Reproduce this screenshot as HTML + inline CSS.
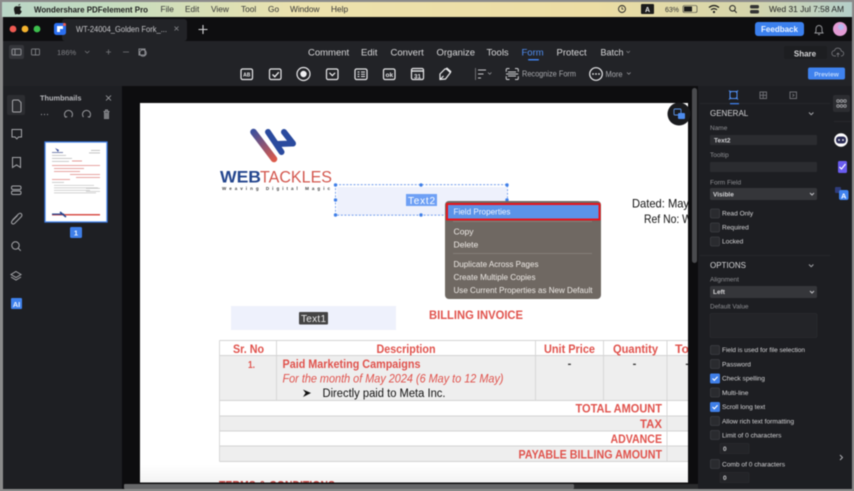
<!DOCTYPE html>
<html><head><meta charset="utf-8"><style>
html,body{margin:0;padding:0;background:#8b8b8b;width:854px;height:491px;overflow:hidden}
svg{display:block;filter:blur(.45px)}
text{font-family:"Liberation Sans",sans-serif}
.nav{font-size:9.5px;fill:#d8d8da}
.lab{font-size:6.5px;fill:#8f9094}
.cb{font-size:6.6px;fill:#d5d5d7}
.hd{font-size:8px;fill:#d5d5d7}
.m{font-size:8.6px;fill:#eeeae6}
.r{font-weight:bold;fill:#e0524c;font-size:11.5px}
.ic{fill:none;stroke:#8c8d92;stroke-width:1}
.tb{fill:none;stroke:#e8e8ea;stroke-width:1.2}
.box{fill:#2a2b2f;stroke:#3d3e43;stroke-width:.8}
.in{fill:#2b2c30}
.g{stroke:#d4d4d4;stroke-width:.9;fill:none}
</style></head><body>
<svg width="854" height="491" viewBox="0 0 854 491" xmlns="http://www.w3.org/2000/svg">
<defs><linearGradient id="mb" x1="0" x2="1" y1="0" y2="0"><stop offset="0" stop-color="#b9d5c6"/><stop offset=".12" stop-color="#c4dcc0"/><stop offset=".35" stop-color="#ece2ae"/><stop offset=".7" stop-color="#ecdda4"/><stop offset=".88" stop-color="#d5d5ac"/><stop offset="1" stop-color="#b4cfc9"/></linearGradient>
<linearGradient id="lg" gradientUnits="userSpaceOnUse" x1="253" y1="131" x2="275" y2="160"><stop offset="0" stop-color="#3c4f9c"/><stop offset="1" stop-color="#dc5a4a"/></linearGradient>
<linearGradient id="pf" x1="0" x2="0" y1="0" y2="1"><stop offset="0" stop-color="#fff"/><stop offset="1" stop-color="#f3f3f3"/></linearGradient>
<clipPath id="pc"><rect x="140" y="103" width="548" height="379.500"/></clipPath></defs>
<rect width="854" height="491" fill="#8b8b8b"/>
<rect x="2" y="2" width="850" height="15" fill="url(#mb)"/>
<rect x="3" y="17" width="849" height="472" fill="#0e0e10"/>
<rect x="3" y="41" width="849" height="45" fill="#222327"/>
<path d="M3 41V22q0-4 4-4h1v23z" fill="#0e0e10"/>
<rect x="62" y="19" width="125" height="22" rx="3" fill="#222327"/>

<!-- menu bar -->
<path d="M18 5.500q1-1.500 2.200-1.500-.1 1.400-2.200 1.500zM14 9c0-3 3-3 4-2.500 1-.5 2.500-.5 3.500.8-1.800 1-1.500 3.400.3 4-.6 1.700-1.800 3.200-2.800 3.200-1 0-1-.5-2-.5s-1 .5-2 .5C15.500 14.500 14 11.500 14 9z" fill="#1a1a1a"/>
<text x="34" y="12.300" font-size="8.600" font-weight="bold" fill="#1d1d1d" textLength="114" lengthAdjust="spacingAndGlyphs">Wondershare PDFelement Pro</text>
<g font-size="8.300" fill="#333"><text x="160.500" y="12">File</text><text x="185" y="12">Edit</text><text x="211" y="12">View</text><text x="241" y="12">Tool</text><text x="268" y="12">Go</text><text x="290" y="12">Window</text><text x="331" y="12">Help</text></g>
<circle cx="622" cy="9" r="3.500" fill="none" stroke="#222" stroke-width=".9"/><path d="M622 7v2.200h1.600" fill="none" stroke="#222" stroke-width=".7"/>
<rect x="641" y="4" width="13" height="10" rx="1" fill="#1b1b1b"/><text x="647.500" y="12" font-size="7" font-weight="bold" fill="#eee" text-anchor="middle">A</text>
<text x="665" y="12" font-size="7" fill="#333">63%</text>
<rect x="683" y="5.500" width="14" height="7" rx="1.500" fill="none" stroke="#333" stroke-width=".6"/><rect x="684" y="6.500" width="8" height="5" fill="#1b1b1b"/>
<path d="M709 7.500q5-4 10 0M711 9.800q3-2.400 6 0" fill="none" stroke="#1b1b1b" stroke-width="1.200"/><circle cx="714" cy="12" r="1.100" fill="#1b1b1b"/>
<circle cx="732.500" cy="8.300" r="2.800" fill="none" stroke="#222" stroke-width="1"/><path d="M734.500 10.500l2.200 2.300" stroke="#222" stroke-width="1"/>
<rect x="750" y="5" width="9" height="3.500" rx="1.500" fill="#333"/><rect x="750" y="10" width="9" height="3.500" rx="1.500" fill="#333"/>
<text x="769" y="12" font-size="8.300" fill="#222" textLength="75" lengthAdjust="spacingAndGlyphs">Wed 31 Jul  7:58 AM</text>

<!-- title bar -->
<circle cx="13" cy="29" r="3.400" fill="#ee5a52"/><circle cx="25" cy="29" r="3.400" fill="#f4b32e"/><circle cx="37" cy="29" r="3.400" fill="#3dc04e"/>
<rect x="54" y="23" width="12" height="12" rx="2.500" fill="#2b6ff0"/><path d="M57 26h6v3h-3v3h-3z" fill="#fff"/><circle cx="64.500" cy="24.500" r="1.500" fill="#ee5a52"/>
<text x="76" y="32" font-size="7.800" fill="#c6c6c9" textLength="91" lengthAdjust="spacingAndGlyphs">WT-24004_Golden Fork_...</text>
<path d="M174.500 26.500l4 4M178.500 26.500l-4 4" stroke="#85868a" stroke-width=".8"/>
<path d="M203 25v9M198.500 29.500h9" stroke="#d5d5d7" stroke-width="1.100"/>
<rect x="755" y="22" width="49" height="14" rx="3" fill="#3b80ee"/><text x="779.500" y="32" font-size="8" font-weight="bold" fill="#eaf2ff" text-anchor="middle">Feedback</text>
<path d="M815 33h8l-1-1.500v-3a3 3 0 0 0-6 0v3zM818 34.500h2" fill="none" stroke="#9a9b9f" stroke-width=".9"/>
<circle cx="840" cy="29" r="7" fill="#e29bd4"/><circle cx="841" cy="27" r="3" fill="#b5b8ee"/>

<!-- toolbar 1 -->
<rect x="9" y="45" width="15" height="14" rx="2" fill="#35363b"/>
<rect x="12" y="49" width="9" height="6" rx="1" class="ic"/><path d="M15 49v6" class="ic"/>
<rect x="31.500" y="49" width="8" height="6" rx="1" class="ic" opacity=".8"/><path d="M35.500 49v6" class="ic" opacity=".8"/>
<text x="57" y="55" font-size="7.500" fill="#808186">186%</text>
<path d="M85 51l2.200 2 2.200-2M106 52h5M108.500 49.500v5M123 52h6" fill="none" stroke="#77787c" stroke-width=".8"/>
<rect x="139" y="49" width="6" height="6" class="ic"/><circle cx="143" cy="53" r="3.300" class="ic"/>
<g class="nav"><text x="308" y="55.500">Comment</text><text x="361" y="55.500">Edit</text><text x="390.500" y="55.500">Convert</text><text x="436.500" y="55.500">Organize</text><text x="486.500" y="55.500">Tools</text><text x="521.500" y="55.500" style="fill:#4f8ef2">Form</text><text x="556.500" y="55.500">Protect</text><text x="600.500" y="55.500" textLength="23" lengthAdjust="spacingAndGlyphs">Batch</text></g>
<path d="M626.500 51l1.700 1.700 1.700-1.700" fill="none" stroke="#85868a" stroke-width=".7"/>
<rect x="528" y="59" width="11" height="1.500" rx=".7" fill="#3f7fe8"/>
<rect x="784" y="46" width="43" height="13" rx="2" fill="#1d1e21"/><text x="805" y="56.500" font-size="8" font-weight="bold" fill="#d5d5d7" text-anchor="middle">Share</text>
<path d="M836 56h-1.500a2.700 2.700 0 0 1 0-5.400 3.500 3.500 0 0 1 6.800.5 2.400 2.400 0 0 1 0 4.900H841M838 57v-4M836.500 54.500l1.500-1.500 1.500 1.500" fill="none" stroke="#808186" stroke-width=".7"/>

<!-- toolbar 2 icons -->
<rect x="241" y="69" width="11.500" height="10.500" rx="1.500" class="tb"/><text x="246.800" y="76.500" font-size="5" font-weight="bold" fill="#e8e8ea" text-anchor="middle">AB</text>
<rect x="269.500" y="69" width="11.500" height="10.500" rx="1.500" class="tb"/><path d="M272.500 74.500l2.300 2.200 4-4.500" fill="none" stroke="#e8e8ea" stroke-width="1.400"/>
<circle cx="303.500" cy="74" r="6.500" class="tb"/><circle cx="303.500" cy="74" r="3.200" fill="#f0f0f2"/>
<rect x="326.500" y="69" width="11.500" height="10.500" rx="1.500" class="tb"/><path d="M329.500 72.800l2.800 2.800 2.800-2.800" fill="none" stroke="#e8e8ea" stroke-width="1.200"/>
<rect x="355" y="69" width="12" height="10.500" rx="1.500" class="tb"/><path d="M357.500 72h2M361 72h4M357.500 74.200h2M361 74.200h4M357.500 76.500h2M361 76.500h4" stroke="#e8e8ea" stroke-width="1"/>
<rect x="383.500" y="69" width="11.500" height="10.500" rx="1.500" class="tb"/><text x="389.300" y="77" font-size="6.500" font-weight="bold" fill="#e8e8ea" text-anchor="middle">ok</text>
<rect x="411.500" y="68.500" width="12" height="11" rx="1.500" class="tb"/><path d="M411.500 71h12" stroke="#e8e8ea" stroke-width="1.400"/><text x="417.500" y="78.300" font-size="6.300" font-weight="bold" fill="#e8e8ea" text-anchor="middle">31</text>
<path d="M440 79.500v-5.500l5-5 1.500 0 4 3.500-5 6.500zM440 79.500l3.500-3.500" fill="none" stroke="#e8e8ea" stroke-width="1.200"/><path d="M445.500 68.500l5 4.200 1-1.300-4.500-4z" fill="#e8e8ea"/>
<path d="M475.500 68v12" stroke="#77787c" stroke-width=".9"/><path d="M478 70h8M478 74h5.500M478 78h3" stroke="#c8c8cb" stroke-width="1"/><path d="M488 72.500l1.700 1.700 1.700-1.700" fill="none" stroke="#a0a1a5" stroke-width=".7"/>
<path d="M509.500 68.500h-2q-1.300 0-1.300 1.300v2M515 68.500h2q1.300 0 1.300 1.300v2M509.500 79.500h-2q-1.300 0-1.300-1.300v-2M515 79.500h2q1.300 0 1.300-1.300v-2" fill="none" stroke="#d0d0d3" stroke-width="1"/><path d="M508 72h8M506 74h12.300M508 76h8" stroke="#d0d0d3" stroke-width=".9"/>
<text x="522" y="76.500" font-size="8.300" fill="#a7a8ac" textLength="54" lengthAdjust="spacingAndGlyphs">Recognize Form</text>
<circle cx="596" cy="74" r="6.300" class="tb"/><circle cx="593" cy="74" r=".9" fill="#e8e8ea"/><circle cx="596" cy="74" r=".9" fill="#e8e8ea"/><circle cx="599" cy="74" r=".9" fill="#e8e8ea"/>
<text x="605.500" y="77" font-size="8.300" fill="#a7a8ac" textLength="17" lengthAdjust="spacingAndGlyphs">More</text>
<path d="M627 72.500l1.800 1.800 1.800-1.800" fill="none" stroke="#a0a1a5" stroke-width=".7"/>
<rect x="808" y="67.500" width="37" height="12" rx="2" fill="#3f82ee"/><text x="826.500" y="76.300" font-size="6.500" font-weight="bold" fill="#bcd5fb" text-anchor="middle">Preview</text>

<!-- left sidebar -->
<rect x="3" y="86" width="119" height="403" fill="#1e1f23"/>
<rect x="7" y="95" width="18" height="20" rx="2" fill="#2c2d31"/>
<path d="M12.500 101.500q0-1.500 1.500-1.500h4.500l2.500 2.500v8.500q0 1-1 1h-6.500q-1 0-1-1z" class="ic" style="stroke:#a5a6aa"/>
<path d="M12 129.500h9.500v7.500h-3l-1.700 1.900-1.700-1.900H12z" class="ic" style="stroke:#a5a6aa"/>
<path d="M12.500 157.500h8v10l-4-2.600-4 2.600z" class="ic" style="stroke:#a5a6aa"/>
<rect x="11.500" y="186" width="9.500" height="3.500" rx="1.500" class="ic" style="stroke:#a5a6aa"/><rect x="11.500" y="191" width="9.500" height="3.500" rx="1.500" class="ic" style="stroke:#a5a6aa"/>
<path d="M12.500 220l6-6q2-1.500 3 0t-.5 3l-6.500 6.500q-1.500 1-2.500 0t0-2.500l5.500-5.500" class="ic" style="stroke:#a5a6aa"/>
<circle cx="15.500" cy="245.500" r="3.700" class="ic" style="stroke:#a5a6aa"/><path d="M18.300 248.300l2.500 2.500" class="ic" style="stroke:#a5a6aa"/>
<path d="M16 271.500l5 3-5 3-5-3zM11 277l5 3 5-3" class="ic" style="stroke:#a5a6aa"/>
<rect x="11" y="298" width="11" height="11" rx="1" fill="#3f82ee"/><text x="16.500" y="307" font-size="7.500" font-weight="bold" fill="#e8f0ff" text-anchor="middle">AI</text>
<text x="40" y="100.500" font-size="7.400" font-weight="bold" fill="#b8b9bd">Thumbnails</text>
<path d="M106 95.500l5 5M111 95.500l-5 5" stroke="#a5a6aa" stroke-width=".8"/>
<g fill="#9a9b9f"><circle cx="41.500" cy="114.500" r=".6"/><circle cx="44.500" cy="114.500" r=".6"/><circle cx="47.500" cy="114.500" r=".6"/></g>
<path d="M65.500 117a4 4 0 1 1 6 0M64.500 115.500l1 1.700 1.700-.6M83.500 117a4 4 0 1 1 6 0M90.500 115.500l-1 1.700-1.700-.6" class="ic" style="stroke:#9a9b9f"/>
<path d="M103.500 111.500h6M104.500 112v6.500h4V112M105.500 111v-1h2v1" class="ic" style="stroke:#8c8d92"/><rect x="104.500" y="112.500" width="4" height="6" fill="#77787c"/>
<rect x="45" y="142" width="62" height="80" fill="#fff" stroke="#3f7fe8" stroke-width="1.300"/>
<path d="M55 148l4 2-1 2z" fill="#3c4f9c"/><rect x="52" y="152" width="11" height="1" fill="#7b86b0"/>
<g fill="#b5b5b5"><rect x="52" y="155" width="14" height=".7"/><rect x="52" y="158" width="20" height=".7"/><rect x="52" y="161" width="17" height=".7"/><rect x="91" y="150" width="9" height=".8"/><rect x="89" y="152.500" width="11" height=".8"/></g>
<rect x="72" y="160.500" width="10" height="1" fill="#e49c98"/>
<g fill="#e7a5a1"><rect x="52" y="165" width="48" height="1"/><rect x="54" y="168" width="30" height="1"/><rect x="54" y="171" width="26" height="1"/><rect x="70" y="174" width="30" height="1"/><rect x="76" y="177" width="24" height="1"/><rect x="52" y="179" width="18" height="1"/></g>
<g fill="#c0c0c0"><rect x="52" y="182" width="12" height=".8"/><rect x="54" y="185" width="40" height=".7"/><rect x="54" y="187.500" width="44" height=".7"/><rect x="54" y="190" width="36" height=".7"/><rect x="54" y="192.500" width="42" height=".7"/><rect x="86" y="188" width="14" height=".7"/><rect x="86" y="191" width="14" height=".7"/></g>
<rect x="52" y="214" width="48" height="1.500" fill="#d8504a"/><rect x="52" y="213.500" width="12" height="1.300" fill="#28478f"/><path d="M60 212l6 5" stroke="#28478f" stroke-width="1.500"/>
<rect x="70" y="227" width="12" height="11" rx="1.500" fill="#3f7fe8"/><text x="76" y="235.500" font-size="7.500" font-weight="bold" fill="#eef4ff" text-anchor="middle">1</text>

<!-- doc -->
<rect x="122" y="86" width="576" height="403" fill="#0d0d0f"/>
<rect x="140" y="103" width="548" height="379.500" fill="#fff"/>
<rect x="140" y="465" width="548" height="17.500" fill="url(#pf)"/>
<rect x="124" y="484" width="450" height="5" rx="1" fill="#666769"/>
<rect x="574" y="484" width="124" height="5" fill="#2a2b2d"/>
<rect x="0" y="489" width="854" height="2" fill="#8b8b8b"/>

<g clip-path="url(#pc)">
<!-- logo -->
<path d="M253.500 132L274 159" stroke="url(#lg)" stroke-width="6.500" stroke-linecap="round" fill="none"/>
<g stroke="#2a4a9e" stroke-width="6" stroke-linecap="round" fill="none"><path d="M268 132l13.500 20M284 132l9 11.500M277 144l15-.5"/></g>
<text x="220" y="182.500" font-size="17" font-weight="bold" fill="#24468e" textLength="41" lengthAdjust="spacingAndGlyphs">WEB</text>
<text x="260" y="182.500" font-size="17" fill="#d3574e" textLength="72" lengthAdjust="spacingAndGlyphs">TACKLES</text>
<text x="222" y="190" font-size="4.500" fill="#444" textLength="108" lengthAdjust="spacing" font-weight="bold">Weaving Digital Magic</text>

<!-- field 2 -->
<rect x="337" y="187" width="170" height="28" fill="#eef1fc"/>
<rect x="335.500" y="184.700" width="172" height="30.500" fill="none" stroke="#5f8fea" stroke-width=".8" stroke-dasharray="2 1.600"/>
<g fill="#3f7fe8"><circle cx="335.500" cy="185" r="1.700"/><circle cx="421" cy="185" r="1.700"/><circle cx="507" cy="185" r="1.700"/><circle cx="335.500" cy="200" r="1.700"/><circle cx="507" cy="200" r="1.700"/><circle cx="335.500" cy="215" r="1.700"/><circle cx="421" cy="215" r="1.700"/></g>
<rect x="406" y="194" width="31" height="12" fill="#6ea0f5"/><text x="421.500" y="204" font-size="10" fill="#fff" text-anchor="middle" textLength="27" lengthAdjust="spacing">Text2</text>
<text x="632" y="207.500" font-size="12" fill="#111" textLength="57" lengthAdjust="spacingAndGlyphs">Dated: May</text>
<text x="644" y="223" font-size="12" fill="#111" textLength="48" lengthAdjust="spacingAndGlyphs">Ref No: W</text>

<!-- field 1 -->
<rect x="231" y="306" width="165" height="24" fill="#eef1fc"/>
<rect x="299" y="312" width="29" height="12.500" rx="1" fill="#444"/><text x="313.500" y="322" font-size="10" fill="#eee" text-anchor="middle" textLength="25" lengthAdjust="spacing">Text1</text>
<text x="429" y="319" class="r" style="font-size:12px" textLength="94" lengthAdjust="spacingAndGlyphs">BILLING INVOICE</text>

<!-- table -->
<rect x="220" y="356" width="468" height="45" fill="#eeeeee"/><rect x="220" y="416" width="468" height="15" fill="#eeeeee"/><rect x="220" y="446" width="468" height="15" fill="#eeeeee"/>
<g class="g"><path d="M219.500 340.500H688M219.500 355.500H688M219.500 400.500H688M219.500 416H688M219.500 431H688M219.500 446H688M219.500 461.500H688"/><path d="M219.500 340.500V461.500M276.500 340.500V400.500M535.500 340.500V400.500M603.500 340.500V400.500M667 340.500V461.500"/></g>
<text x="233" y="353" class="r" textLength="31" lengthAdjust="spacingAndGlyphs">Sr. No</text>
<text x="376.500" y="353" class="r" textLength="59" lengthAdjust="spacingAndGlyphs">Description</text>
<text x="544" y="353" class="r" textLength="51" lengthAdjust="spacingAndGlyphs">Unit Price</text>
<text x="613" y="353" class="r" textLength="45" lengthAdjust="spacingAndGlyphs">Quantity</text>
<text x="675" y="353" class="r" textLength="14" lengthAdjust="spacingAndGlyphs">To</text>
<text x="248" y="368" class="r" textLength="7" lengthAdjust="spacingAndGlyphs" style="font-size:10px">1.</text>
<text x="282.500" y="368" class="r" textLength="138" lengthAdjust="spacingAndGlyphs">Paid Marketing Campaigns</text>
<text x="282.500" y="382.500" font-size="11.500" font-style="italic" fill="#e0524c" textLength="221" lengthAdjust="spacingAndGlyphs">For the month of May 2024 (6 May to 12 May)</text>
<path d="M303 389.500l8 3.500-8 4 2.500-4z" fill="#111"/>
<text x="322.500" y="397" font-size="11.500" fill="#111" textLength="123" lengthAdjust="spacingAndGlyphs">Directly paid to Meta Inc.</text>
<text x="569.500" y="367" font-size="11" font-weight="bold" fill="#333" text-anchor="middle">-</text><text x="634.500" y="367" font-size="11" font-weight="bold" fill="#333" text-anchor="middle">-</text><text x="689" y="367" font-size="11" font-weight="bold" fill="#333" text-anchor="end">-</text>
<text x="575.500" y="412.500" class="r" textLength="86.500" lengthAdjust="spacingAndGlyphs">TOTAL AMOUNT</text>
<text x="640" y="428" class="r" textLength="22" lengthAdjust="spacingAndGlyphs">TAX</text>
<text x="610.500" y="443" class="r" textLength="51.500" lengthAdjust="spacingAndGlyphs">ADVANCE</text>
<text x="518.500" y="458.500" class="r" textLength="143.500" lengthAdjust="spacingAndGlyphs">PAYABLE BILLING AMOUNT</text>
<text x="219" y="489.500" font-size="12" font-weight="bold" fill="#c0403c" textLength="116" lengthAdjust="spacingAndGlyphs">TERMS &amp; CONDITIONS</text>
</g>

<rect x="692" y="88" width="5" height="175" rx="2.500" fill="#4a4b4e"/>
<circle cx="679" cy="114" r="11.500" fill="#1a1b1e"/><rect x="674" y="109" width="7" height="6" rx="1" fill="none" stroke="#5b93e8" stroke-width=".9"/><rect x="678" y="113" width="7" height="6" rx="1" fill="#4d8cee"/>

<!-- context menu -->
<rect x="445" y="201" width="156" height="98" rx="4" fill="#6f6862"/>
<rect x="447" y="204" width="152.500" height="15.500" fill="#5b93e8" stroke="#e8141c" stroke-width="2"/>
<text x="453.500" y="214.500" class="m" style="fill:#f2f6ff" textLength="57" lengthAdjust="spacingAndGlyphs">Field Properties</text>
<path d="M453 221.500h139M453 253.500h139" stroke="#8b8580" stroke-width=".7"/>
<g class="m"><text x="453.500" y="234.500">Copy</text><text x="453.500" y="247.500">Delete</text><text x="453.500" y="267" textLength="85" lengthAdjust="spacingAndGlyphs">Duplicate Across Pages</text><text x="453.500" y="280" textLength="82" lengthAdjust="spacingAndGlyphs">Create Multiple Copies</text><text x="453.500" y="293" textLength="139" lengthAdjust="spacingAndGlyphs">Use Current Properties as New Default</text></g>

<!-- right panel -->
<rect x="698" y="86" width="154" height="403" fill="#1d1e22"/>
<path d="M700 103.500h130M700 255.500h130" stroke="#2a2b2f" stroke-width=".8"/>
<path d="M730 91.500h7v7h-7zM729 90.500l2 2M738 90.500l-2 2M729 99.500l2-2M738 99.500l-2-2" fill="none" stroke="#4f8ef2" stroke-width="1"/>
<rect x="730" y="103" width="9" height="1.300" fill="#3f7fe8"/>
<rect x="760" y="92" width="6.500" height="6.500" class="ic" style="stroke:#6c6d72"/><path d="M760 95.200h6.500M763.200 92v6.500" class="ic" style="stroke:#6c6d72"/>
<rect x="790" y="92" width="6.500" height="6.500" class="ic" style="stroke:#6c6d72"/><path d="M792.500 94l1.500 1.300-1.500 1.300" class="ic" style="stroke:#6c6d72"/>
<text x="710" y="116" class="hd">GENERAL</text><path d="M809 112.500l2.200 2.200 2.200-2.200" class="ic" style="stroke:#a5a6aa"/>
<text x="710" y="130" class="lab">Name</text>
<rect x="710" y="135" width="107" height="10" rx="1" class="in"/><text x="714" y="142.500" font-size="6.500" font-weight="bold" fill="#cfcfd2">Text2</text>
<text x="710" y="157" class="lab">Tooltip</text>
<rect x="710" y="162" width="107" height="10" rx="1" class="in"/>
<text x="710" y="184.500" class="lab">Form Field</text>
<rect x="710" y="188" width="107" height="12" rx="1.500" fill="#35363a"/><text x="713" y="196.500" font-size="6.500" font-weight="bold" fill="#d5d5d7">Visible</text><path d="M810 193l2 2 2-2" class="ic" style="stroke:#c0c1c5"/>
<g class="box"><rect x="710.500" y="209" width="9" height="9" rx="1.500"/><rect x="710.500" y="223" width="9" height="9" rx="1.500"/><rect x="710.500" y="237" width="9" height="9" rx="1.500"/><rect x="710.500" y="345.500" width="9" height="9" rx="1.500"/><rect x="710.500" y="359.500" width="9" height="9" rx="1.500"/><rect x="710.500" y="388" width="9" height="9" rx="1.500"/><rect x="710.500" y="416.500" width="9" height="9" rx="1.500"/><rect x="710.500" y="430.500" width="9" height="9" rx="1.500"/><rect x="710.500" y="459.500" width="9" height="9" rx="1.500"/></g>
<rect x="710" y="373.500" width="10" height="10" rx="1.500" fill="#3f7fe8"/><path d="M712.500 378.500l1.800 1.800 3.300-3.600" fill="none" stroke="#fff" stroke-width="1.100"/>
<rect x="710" y="402" width="10" height="10" rx="1.500" fill="#3f7fe8"/><path d="M712.500 407l1.800 1.800 3.300-3.600" fill="none" stroke="#fff" stroke-width="1.100"/>
<g class="cb"><text x="722" y="215.500">Read Only</text><text x="722" y="229.500">Required</text><text x="722" y="243.500">Locked</text><text x="722" y="352" textLength="83" lengthAdjust="spacingAndGlyphs">Field is used for file selection</text><text x="722" y="366.500">Password</text><text x="722" y="380.500">Check spelling</text><text x="722" y="395">Multi-line</text><text x="722" y="409">Scroll long text</text><text x="722" y="423.500" textLength="72" lengthAdjust="spacingAndGlyphs">Allow rich text formatting</text><text x="722" y="437.500">Limit of 0 characters</text><text x="722" y="466.500">Comb of 0 characters</text></g>
<text x="710" y="268" class="hd">OPTIONS</text><path d="M809 264.500l2.200 2.200 2.200-2.200" class="ic" style="stroke:#a5a6aa"/>
<text x="710" y="281.500" class="lab">Alignment</text>
<rect x="710" y="286" width="107" height="12" rx="1.500" fill="#35363a"/><text x="713" y="294" font-size="6.500" font-weight="bold" fill="#d5d5d7">Left</text><path d="M810 291l2 2 2-2" class="ic" style="stroke:#c0c1c5"/>
<text x="710" y="308.500" class="lab">Default Value</text>
<rect x="710" y="313.500" width="107" height="24" rx="1.500" fill="#232428" stroke="#2e2f33" stroke-width=".6"/>
<rect x="720" y="443.500" width="29" height="10" rx="1" fill="#232428" stroke="#2e2f33" stroke-width=".6"/><text x="723" y="451" font-size="6.500" font-weight="bold" fill="#c8c8cb">0</text>
<rect x="720" y="472.500" width="29" height="10" rx="1" fill="#232428" stroke="#2e2f33" stroke-width=".6"/><text x="723" y="480" font-size="6.500" font-weight="bold" fill="#c8c8cb">0</text>

<!-- far right column -->
<rect x="833" y="95" width="17" height="17" rx="2" fill="#2c2d31"/>
<g fill="none" stroke="#a5a6aa" stroke-width=".8"><circle cx="838" cy="101" r="1.300"/><circle cx="841.500" cy="101" r="1.300"/><circle cx="845" cy="101" r="1.300"/><circle cx="838" cy="106" r="1.300"/><circle cx="841.500" cy="106" r="1.300"/><circle cx="845" cy="106" r="1.300"/></g>
<path d="M834 121.500h17" stroke="#2d2e32" stroke-width=".8"/>
<circle cx="841" cy="140" r="6.800" fill="#fff"/><rect x="836" y="136.500" width="10" height="7" rx="3" fill="#2a2b55"/><circle cx="839" cy="140" r=".9" fill="#fff"/><circle cx="843" cy="140" r=".9" fill="#fff"/>
<rect x="838" y="161" width="9" height="12" rx="1.500" fill="#6a5cf0"/><path d="M839.500 167l2 2 4-5" fill="none" stroke="#fff" stroke-width="1.200"/>
<rect x="835" y="187" width="6" height="6" rx="1" fill="#2f3c7c"/><rect x="839" y="190" width="9.500" height="10" rx="2" fill="#3f82ee"/><text x="843.700" y="198.500" font-size="7.500" font-weight="bold" fill="#fff" text-anchor="middle">A</text>
<path d="M840 455l2.500 2.500-2.500 2.500" fill="none" stroke="#b5b6ba" stroke-width=".9"/>
</svg>
</body></html>
